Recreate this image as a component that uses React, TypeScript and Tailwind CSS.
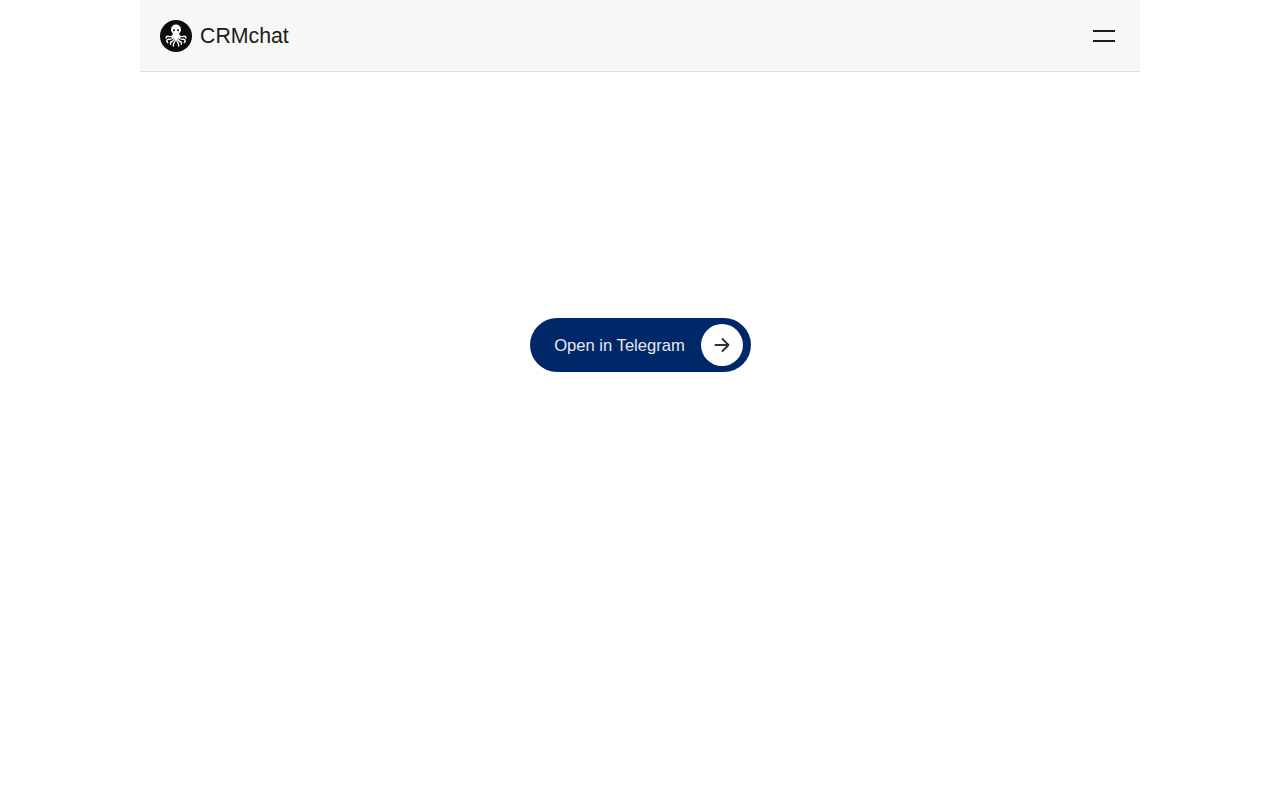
import React from "react";

function Logo() {
  return (
    <svg width="32" height="32" viewBox="0 0 32 32" className="shrink-0">
      <circle cx="16" cy="16" r="16" fill="#0d0d0d" />
      <ellipse cx="16" cy="9.500" rx="5" ry="5" fill="#fff" />
      <path d="M12.800 12.500h6.400l.2 3 1 2.500h-8.800l1-2.500z" fill="#fff" />
      <circle cx="14" cy="10.300" r="1" fill="#0d0d0d" />
      <circle cx="18" cy="10.300" r="1" fill="#0d0d0d" />
      <g fill="none" stroke="#fff" strokeWidth="1.400" strokeLinecap="round" strokeLinejoin="round">
        <path d="M13 15.500c-1.500 1.500-3.500 1.200-4.800.8-1.300-.3-2.300.6-2 1.800" />
        <path d="M13.500 17c-1 2-2.800 2.500-4.300 2.300-1.500-.2-2.700.5-2.300 2.200l.8 1" />
        <path d="M14.500 17.500c-.2 2.300-1.400 3.500-2.700 4-1.200.5-1.600 1.500-1.100 2.800" />
        <path d="M15.500 18c.1 2.500-.6 4-1.700 5l-.5 3" />
        <path d="M16.500 18c-.1 2.500.6 4 1.700 5l.5 3" />
        <path d="M17.500 17.500c.2 2.300 1.400 3.500 2.700 4 1.200.5 1.600 1.500 1.100 2.800" />
        <path d="M18.500 17c1 2 2.800 2.500 4.300 2.300 1.500-.2 2.700.5 2.300 2.200l-.8 1" />
        <path d="M19 15.500c1.500 1.500 3.500 1.200 4.800.8 1.300-.3 2.300.6 2 1.800" />
      </g>
    </svg>
  );
}

export default function App() {
  return (
    <div className="min-h-[800px] bg-white flex flex-col items-center font-['Liberation_Sans',Arial,sans-serif]">
      <header className="w-[1000px] h-[72px] bg-[#f7f7f7] border-b border-[#dedede] flex items-center justify-between pl-5 pr-[25px]">
        <div className="flex items-center gap-2">
          <Logo />
          <span className="pt-0.5 text-[21.300px] leading-none text-[#1c1c14]">CRMchat</span>
        </div>
        <div className="flex flex-col gap-2 w-[22px]">
          <div className="h-0.5 bg-[#1c1c14]" />
          <div className="h-0.5 bg-[#1c1c14]" />
        </div>
      </header>
      <main className="h-[546px] flex items-center justify-center w-full pl-px">
        <button className="h-[54px] rounded-full bg-[#002868] flex items-center pl-6 pr-2 gap-4 text-[#e5e7eb] text-[16.600px]">
          <span className="pt-0.5">Open in Telegram</span>
          <span className="w-[42px] h-[42px] rounded-full bg-white flex items-center justify-center">
            <svg width="18" height="18" viewBox="0 0 18 18" fill="none" stroke="#333328" strokeWidth="1.900" strokeLinecap="round" strokeLinejoin="round">
              <path d="M2.500 9h13M9.500 3l6 6-6 6" />
            </svg>
          </span>
        </button>
      </main>
    </div>
  );
}
